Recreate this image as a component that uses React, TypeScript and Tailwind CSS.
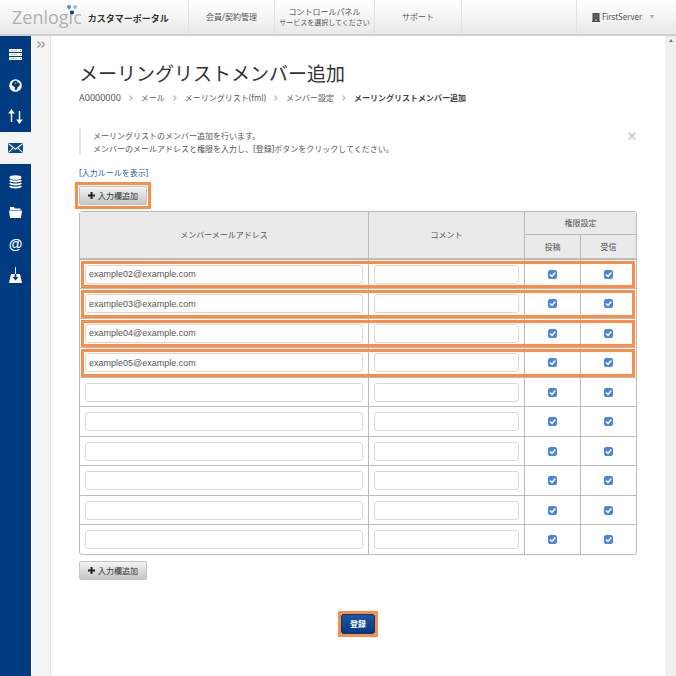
import type { ReactNode } from "react";

const members = [
  "example02@example.com",
  "example03@example.com",
  "example04@example.com",
  "example05@example.com",
  "",
  "",
  "",
  "",
  "",
  "",
];

const crumbs = ["メール", "メーリングリスト(fml)", "メンバー設定"];

function ServerIcon() {
  return (
    <svg viewBox="0 0 13 11" className="h-[11px] w-[13px]" fill="currentColor">
      <path d="M0 0h13v3H0zM0 4h13v3H0zM0 8h13v3H0z" />
      <path d="M2 1.3h6v.5H2zM2 5.3h6v.5H2zM2 9.3h6v.5H2zM11 1h1v1h-1zM11 5h1v1h-1zM11 9h1v1h-1z" fill="#6f93bf" />
    </svg>
  );
}

function GlobeIcon() {
  return (
    <svg viewBox="0 0 13 13" className="size-[13px]">
      <circle cx="6.5" cy="6.5" r="6.3" fill="currentColor" />
      <path
        d="M4.6 2.2 7 1.6l1.6.8-.4 1.2 1.6-.2 1.2 1.8-.8 2-1.4.8-.6 2-1.6 1.4-.9-1.6.2-1.8-1.7-.8L2.9 6l.3-2z"
        fill="#003a80"
      />
      <path d="m6.6 3.4 1 .6-1 .7-.9-.5z" fill="currentColor" />
    </svg>
  );
}

function TransferIcon() {
  return (
    <svg viewBox="0 0 15 15" className="size-[15px]" fill="currentColor">
      <path d="M3.5 0 6.8 4.5H4.2V13H2.8V4.500H.2zM11.500 15 8.200 10.500h2.600V2h1.400v8.500h2.600z" />
    </svg>
  );
}

function MailIcon() {
  return (
    <svg viewBox="0 0 15 10" className="h-[10px] w-[15px]">
      <rect width="15" height="10" rx="1" fill="#0a4a8c" />
      <path d="m.5.8 7 5.4 7-5.400M.5 9.400l4.800-4.600M14.500 9.400 9.700 4.800" fill="none" stroke="#f4f4f4" strokeWidth="1.1" />
    </svg>
  );
}

function DatabaseIcon() {
  return (
    <svg viewBox="0 0 13 14" className="h-3.5 w-[13px]">
      <ellipse cx="6.5" cy="2.5" rx="6" ry="2.3" fill="currentColor" />
      <path
        d="M.8 5c1.400 2 10 2 11.400 0M.8 8c1.400 2 10 2 11.400 0M.8 11c1.400 2 10 2 11.400 0"
        fill="none"
        stroke="currentColor"
        strokeWidth="2"
      />
    </svg>
  );
}

function FolderIcon() {
  return (
    <svg viewBox="0 0 13 11" className="h-[11px] w-[13px]" fill="currentColor">
      <path d="M1 0h4l1 1.5h5.500V3H1z" />
      <path d="M0 3.6h13L12 11H1z" />
    </svg>
  );
}

function InstallIcon() {
  return (
    <svg viewBox="0 0 13 16" className="h-4 w-[13px]" fill="currentColor">
      <path d="M6 0h1v7H6zM2 7h9l2 9H0z" />
      <path d="M5.7 7h1.600v3h2.200l-3 3.500-3-3.500h2.200z" fill="#003a80" />
    </svg>
  );
}

const menu: { label: string; icon: ReactNode; active?: boolean }[] = [
  { label: "サーバー", icon: <ServerIcon /> },
  { label: "ドメイン", icon: <GlobeIcon /> },
  { label: "転送", icon: <TransferIcon /> },
  { label: "メール", icon: <MailIcon />, active: true },
  { label: "データベース", icon: <DatabaseIcon /> },
  { label: "ファイル", icon: <FolderIcon /> },
  {
    label: "アドレス",
    icon: <span className="font-['Liberation_Sans',sans-serif] text-[14px] leading-4 font-bold">@</span>,
  },
  { label: "インストール", icon: <InstallIcon /> },
];

function Header() {
  return (
    <header className="flex h-9 border-b-2 border-[#cfcfcf] bg-linear-to-b from-white to-[#e9e9e9]">
      <a href="#" className="flex w-[189px] shrink-0 items-center border-r border-[#e2e2e2] pl-3">
        <span className="relative font-['Open_Sans',sans-serif] text-[18px] leading-6 font-medium text-[#b0b0b0]">
          Zenlogic
          <svg viewBox="0 0 12 12" className="absolute top-0 right-1 size-3">
            <circle cx="3" cy="2" r="2" fill="#4f8edc" />
            <circle cx="9" cy="2" r="2" fill="#8fc0f0" />
            <circle cx="6" cy="7.5" r="2" fill="#003a80" />
          </svg>
        </span>
        <span className="ml-1.5 pt-1 text-[9px] font-bold text-[#333]">カスタマーポータル</span>
      </a>
      <nav className="flex text-center">
        <a href="#" className="flex w-[86px] items-center justify-center border-r border-[#e2e2e2]">
          会員/契約管理
        </a>
        <a href="#" className="flex w-[100px] flex-col justify-center border-r border-[#e2e2e2]">
          <span className="leading-3">コントロールパネル</span>
          <span className="text-[7px] leading-[10px] whitespace-nowrap">サービスを選択してください</span>
        </a>
        <a href="#" className="flex w-[87px] items-center justify-center border-r border-[#e2e2e2]">
          サポート
        </a>
      </nav>
      <button className="ml-auto flex w-[100px] items-center border-l border-[#e2e2e2] pl-[15px]">
        <svg viewBox="0 0 8 9" className="h-[9px] w-2">
          <path d="M.5 0h7v8H8v1H0V8h.5z" fill="#4a4a4a" />
          <path
            d="M2 1.500h1v1H2zM3.500 1.500h1v1h-1zM5 1.500h1v1H5zM2 3.300h1v1H2zM3.500 3.300h1v1h-1zM5 3.300h1v1H5zM2 5h1v1H2zM5 5h1v1H5z"
            fill="#888"
          />
          <path d="M3.300 6.500h1.400V8H3.300z" fill="#ddd" />
        </svg>
        <span className="ml-0.5">FirstServer</span>
        <svg viewBox="0 0 4 4" className="ml-2 size-1">
          <path d="M0 0h4L2 4z" fill="#aaa" />
        </svg>
      </button>
    </header>
  );
}

function Sidebar() {
  return (
    <aside className="flex shrink-0">
      <nav className="flex w-8 flex-col border-r border-white bg-[#003a80] pt-[3px] text-white">
        {menu.map((item) => (
          <a
            key={item.label}
            href="#"
            aria-label={item.label}
            className={
              item.active
                ? "-mr-px mb-0.5 flex h-8 items-center justify-center bg-[#f4f4f4] pr-px"
                : "flex h-[31px] items-center justify-center"
            }
          >
            {item.icon}
          </a>
        ))}
      </nav>
      <div className="w-[19px] border-r border-[#e6e6e6] bg-[#f4f4f4] pt-[5px]">
        <button aria-label="メニューを開く" className="flex w-full justify-center">
          <svg viewBox="0 0 8 7" className="h-[7px] w-2" fill="none" stroke="#999" strokeWidth="1.3">
            <path d="m.5.5 3 3-3 3M4.500.5l3 3-3 3" />
          </svg>
        </button>
      </div>
    </aside>
  );
}

function Chevron() {
  return (
    <svg viewBox="0 0 4 6" className="h-1.5 w-1" fill="none" stroke="#bbb" strokeWidth="1.3">
      <path d="M.5.500 3 3 .5 5.500" />
    </svg>
  );
}

function AddButton() {
  return (
    <button className="flex h-[19px] items-center gap-[3px] rounded-[2px] border border-[#c4c4c4] bg-linear-to-b from-[#f4f4f4] to-[#c6c6c6] px-2 text-[#333]">
      <svg viewBox="0 0 7 7" className="size-[7px]">
        <path d="M3.500 0v7M0 3.500h7" stroke="#222" strokeWidth="2" />
      </svg>
      入力欄追加
    </button>
  );
}

function Check({ label }: { label: string }) {
  return (
    <span className="mx-auto grid size-[9px]">
      <input
        type="checkbox"
        defaultChecked
        aria-label={label}
        className="peer col-start-1 row-start-1 size-[9px] appearance-none rounded-[2px] border border-[#4a87d9] bg-white checked:bg-[#4a87d9]"
      />
      <svg
        viewBox="0 0 9 9"
        className="pointer-events-none invisible col-start-1 row-start-1 size-[9px] peer-checked:visible"
      >
        <path d="m2 4.500 2 2 3.300-4" fill="none" stroke="#fff" strokeWidth="1.5" />
      </svg>
    </span>
  );
}

const field =
  "block h-[19px] w-full rounded-[3px] border border-[#d8d8d8] bg-white px-[3px] font-['Liberation_Sans','Noto_Sans_CJK_JP',sans-serif] text-[9px] text-[#555]";

function MemberTable() {
  return (
    <table className="mt-1.5 w-full table-fixed border-separate border-spacing-0 rounded-[3px] border border-[#bbb]">
      <colgroup>
        <col />
        <col className="w-[156px]" />
        <col className="w-14" />
        <col className="w-14" />
      </colgroup>
      <thead className="bg-[#eaeaea]">
        <tr className="h-[23px]">
          <th rowSpan={2} className="border-b-2 border-[#bbb] font-normal">
            メンバーメールアドレス
          </th>
          <th rowSpan={2} className="border-b-2 border-l border-[#bbb] font-normal">
            コメント
          </th>
          <th colSpan={2} className="border-b border-l border-[#bbb] font-normal">
            権限設定
          </th>
        </tr>
        <tr className="h-[25px]">
          <th className="border-b-2 border-l border-[#bbb] font-normal">投稿</th>
          <th className="border-b-2 border-l border-[#bbb] font-normal">受信</th>
        </tr>
      </thead>
      <tbody>
        {members.map((email, i) => (
          <tr key={i} className="group relative h-[29px] not-last:even:h-[30px]">
            <td className="border-b border-[#bbb] px-[5px] py-0 group-last:border-b-0">
              <input type="text" defaultValue={email} aria-label={`メンバーメールアドレス ${i + 1}`} className={field} />
              {email && (
                <span className="pointer-events-none absolute inset-x-px top-px bottom-px border-3 border-[#ff8c46]" />
              )}
            </td>
            <td className="border-b border-l border-[#bbb] px-[5px] py-0 group-last:border-b-0">
              <input type="text" aria-label={`コメント ${i + 1}`} className={field} />
            </td>
            <td className="border-b border-l border-[#bbb] p-0 group-last:border-b-0">
              <Check label={`投稿 ${i + 1}`} />
            </td>
            <td className="border-b border-l border-[#bbb] p-0 group-last:border-b-0">
              <Check label={`受信 ${i + 1}`} />
            </td>
          </tr>
        ))}
      </tbody>
    </table>
  );
}

export default function App() {
  return (
    <div className="flex min-h-screen flex-col bg-white font-['Noto_Sans','Noto_Sans_CJK_JP',sans-serif] text-[8px] leading-3 text-[#555]">
      <Header />
      <div className="flex flex-1">
        <Sidebar />
        <main className="min-w-0 flex-1 px-7 pt-[26px] pb-10">
          <h1 className="text-[19px] leading-6 text-[#333]">メーリングリストメンバー追加</h1>
          <nav className="mt-1.5 flex items-center gap-2 whitespace-nowrap">
            <a href="#" className="text-[9px]">
              A0000000
            </a>
            {crumbs.map((crumb) => (
              <span key={crumb} className="flex items-center gap-2">
                <Chevron />
                <a href="#">{crumb}</a>
              </span>
            ))}
            <Chevron />
            <span className="font-bold text-[#444]">メーリングリストメンバー追加</span>
          </nav>

          <div className="mt-[25px] flex items-start justify-between border-l-2 border-[#e4e4e4] pl-3">
            <p className="leading-[13px]">
              メーリングリストのメンバー追加を行います。
              <br />
              メンバーのメールアドレスと権限を入力し、[登録]ボタンをクリックしてください。
            </p>
            <button aria-label="閉じる" className="mt-[3px] mr-px">
              <svg viewBox="0 0 8 8" className="size-2">
                <path d="m.5.5 7 7M7.500.5l-7 7" stroke="#bbb" strokeWidth="1.2" />
              </svg>
            </button>
          </div>

          <a href="#" className="mt-3 block w-fit text-[#2a6496]">
            [入力ルールを表示]
          </a>
          <div className="relative mt-[7px] w-fit">
            <AddButton />
            <span className="pointer-events-none absolute -inset-1 border-3 border-[#ff8c46]" />
          </div>
          <MemberTable />
          <div className="mt-1.5 w-fit">
            <AddButton />
          </div>
          <div className="relative mx-auto mt-[34px] w-fit">
            <button className="block h-5 rounded-[2px] border border-[#003a80] bg-linear-to-b from-[#1f58a0] to-[#003a80] px-2 font-bold text-white">
              登録
            </button>
            <span className="pointer-events-none absolute -inset-[3px] border-3 border-[#ff8c46]" />
          </div>
        </main>
        <div className="flex w-[11px] shrink-0 justify-center bg-[#f0f0f0] pt-[3px]">
          <svg viewBox="0 0 4 3" className="h-[3px] w-1">
            <path d="M0 3h4L2 0z" fill="#777" />
          </svg>
        </div>
      </div>
    </div>
  );
}
